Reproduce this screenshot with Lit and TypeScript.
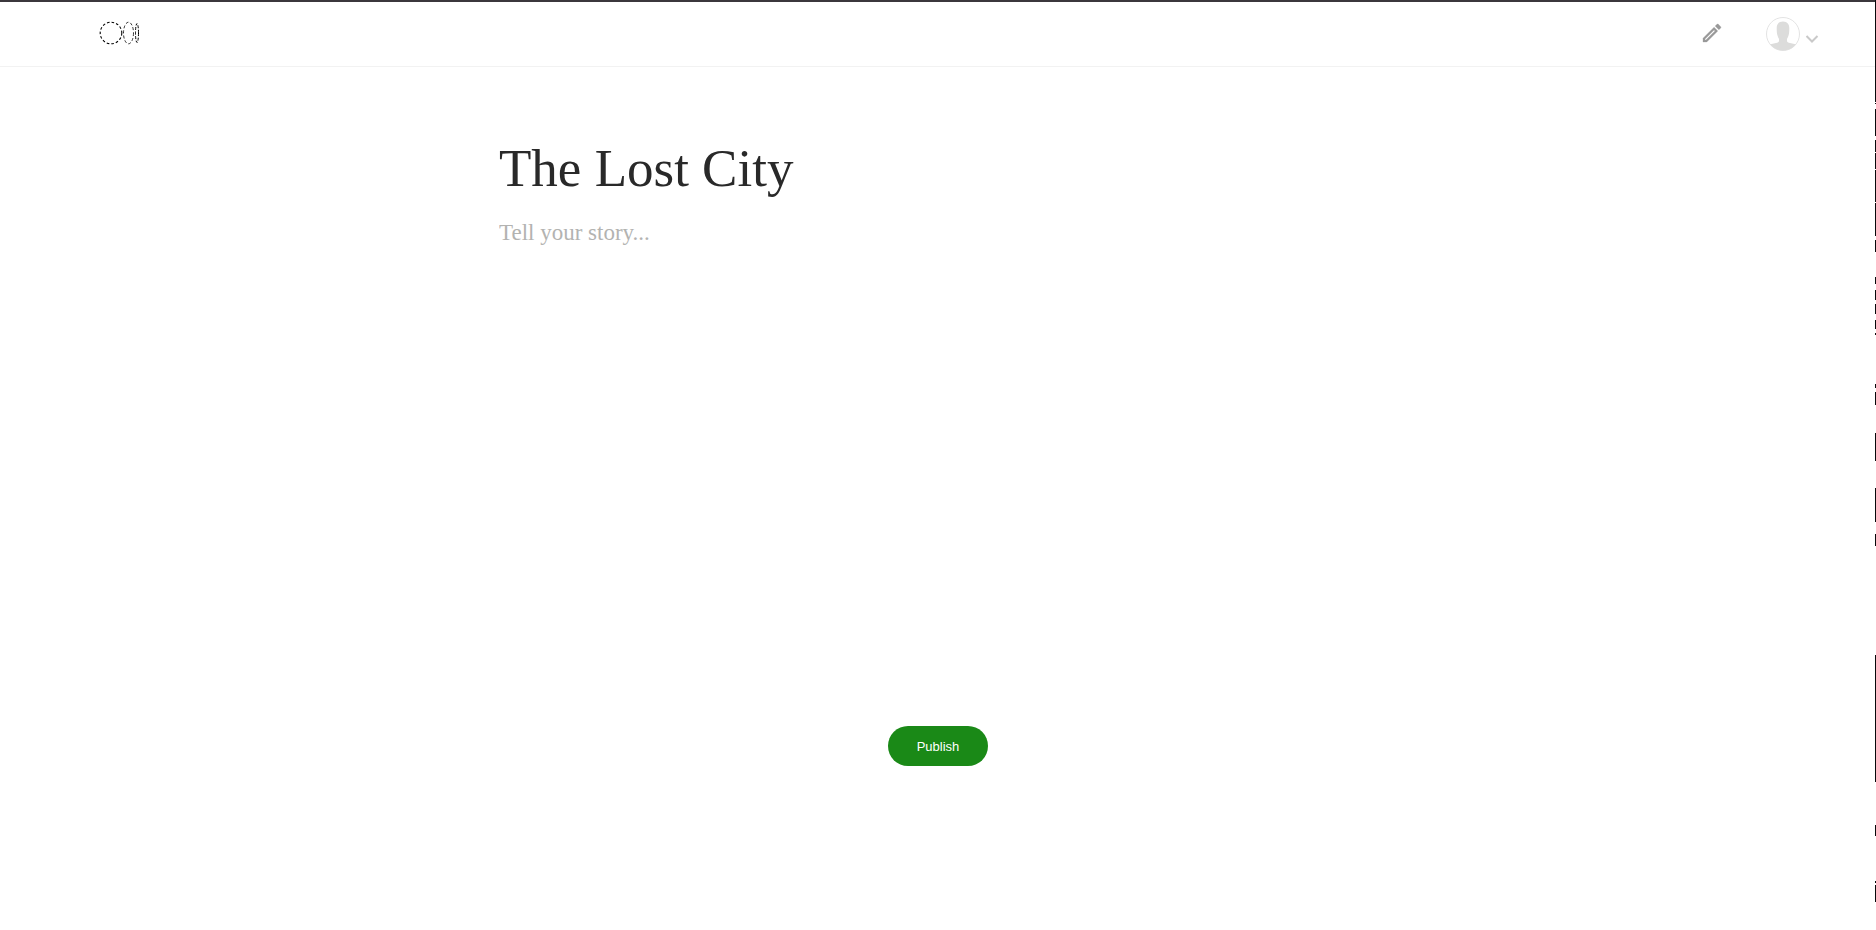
import { LitElement, html, css, svg } from "lit";
import { customElement, state } from "lit/decorators.js";

// [start, end] of each dark stretch along the window's right edge
const EDGE_MARKS: [number, number][] = [
  [0, 102], [103, 104], [109, 136], [140, 152], [153, 169], [170, 202],
  [203, 236], [240, 252], [277, 284], [290, 300], [304, 314], [320, 329],
  [333, 335], [384, 388], [392, 405], [433, 461], [488, 522], [534, 546],
  [655, 782], [825, 836], [881, 883], [885, 902],
];

@customElement("site-header")
export class SiteHeader extends LitElement {
  static styles = css`
    :host {
      display: block;
    }
    .bar {
      box-sizing: border-box;
      height: 67px;
      display: flex;
      align-items: center;
      justify-content: space-between;
      padding: 0 57px 2px 99px;
      border-top: 2px solid #3b373c;
      border-bottom: 1px solid #f2f2f2;
    }
    svg {
      display: block;
    }
    .actions {
      display: flex;
      align-items: center;
      gap: 41px;
    }
    button {
      border: 0;
      padding: 0;
      background: none;
      cursor: pointer;
    }
    .account {
      display: flex;
      align-items: center;
      gap: 4px;
      padding-top: 2px;
    }
    .chevron {
      margin-top: 10px;
    }
  `;

  render() {
    return html`
      <header class="bar">
        <a href="#" aria-label="Home">
          <svg width="42" height="24" viewBox="0 0 42 24" fill="none" stroke="#000">
            <circle cx="12" cy="12" r="10.8" stroke-dasharray="2.600 2.050" stroke-width="1.100" />
            <ellipse cx="29.5" cy="12" rx="5" ry="10.8" stroke-dasharray="3 2" stroke-width="0.8" />
            <ellipse cx="38" cy="12" rx="1.500" ry="9.500" stroke-dasharray="3 1.500" stroke-width="1" />
          </svg>
        </a>
        <nav class="actions">
          <button aria-label="Write">
            <svg width="24" height="24" viewBox="0 0 24 24" fill="#999" stroke="#999" stroke-width="0.3">
              <path d="M14.06 9.02l.92.92L5.92 19H5v-.92l9.06-9.06M17.66 3c-.25 0-.51.1-.7.29l-1.83 1.83 3.75 3.75 1.83-1.83c.39-.39.39-1.02 0-1.41l-2.34-2.34c-.2-.2-.45-.29-.71-.29zm-3.6 3.19L3 17.25V21h3.75L17.81 9.94l-3.75-3.75z" />
            </svg>
          </button>
          <button class="account" aria-label="Account">
            <svg width="36" height="36" viewBox="0 0 36 36">
              <defs>
                <clipPath id="face"><circle cx="18" cy="18" r="16.5" /></clipPath>
              </defs>
              <circle cx="18" cy="18" r="16.5" fill="#fff" stroke="#dcdcdc" stroke-width="0.8" />
              <path
                clip-path="url(#face)"
                fill="#dcdcdb"
                d="M18 5.500c-4.500 0-6.300 3-6.300 6.500 0 3 .1 5.500.8 7.500.4 1.600 1 2.600 1.500 3.200v2c0 1.400-1.200 2-3 2.400C8 27.800 5 28 3 29.500V36h30v-6.500c-2-1.500-5-1.700-8-2.400-1.800-.4-3-1-3-2.400v-2c.5-.6 1.100-1.600 1.500-3.200.7-2 .8-4.500.8-7.500 0-3.500-1.800-6.500-6.300-6.500z"
              />
            </svg>
            <svg class="chevron" width="14" height="10" viewBox="0 0 14 10" fill="none" stroke="#c9c9c9" stroke-width="2">
              <path d="M1.500 2L7 7.500 12.500 2" />
            </svg>
          </button>
        </nav>
      </header>
    `;
  }
}

@customElement("app-root")
export class AppRoot extends LitElement {
  static styles = css`
    :host {
      display: block;
      position: relative;
      min-height: 100vh;
      background: #fff;
      overflow: hidden;
    }
    .editor {
      box-sizing: border-box;
      max-width: 926px;
      margin: 0 auto;
      padding: 69px 24px 0;
      display: flex;
      flex-direction: column;
    }
    .title,
    .story {
      box-sizing: border-box;
      width: 100%;
      border: 0;
      padding: 0;
      margin: 0;
      outline: none;
      resize: none;
      background: none;
      font-family: "Liberation Serif", serif;
      color: #292929;
    }
    .title {
      height: 64px;
      font-size: 53px;
      line-height: 64px;
    }
    .story {
      height: 480px;
      margin-top: 17px;
      font-size: 23px;
      line-height: 32px;
    }
    .story::placeholder {
      color: #b3b3b1;
      opacity: 1;
    }
    .publish {
      align-self: center;
      width: 100px;
      height: 40px;
      margin-top: 29px;
      border: 0;
      border-radius: 20px;
      background: #1a8917;
      color: #fff;
      font-family: "Liberation Sans", sans-serif;
      font-size: 13px;
      cursor: pointer;
    }
    .edge {
      position: absolute;
      top: 0;
      right: 0;
      width: 1px;
      height: 930px;
    }
  `;

  @state() private heading = "The Lost City";

  render() {
    return html`
      <site-header></site-header>
      <main class="editor">
        <input
          class="title"
          aria-label="Title"
          .value=${this.heading}
          @input=${(e: Event) => (this.heading = (e.target as HTMLInputElement).value)}
        />
        <textarea class="story" aria-label="Story" placeholder="Tell your story..."></textarea>
        <button class="publish">Publish</button>
      </main>
      <svg class="edge" aria-hidden="true" shape-rendering="crispEdges">
        ${EDGE_MARKS.map(([from, to]) => svg`<rect x="0" y=${from} width="1" height=${to - from} fill="#08090b" />`)}
      </svg>
    `;
  }
}
